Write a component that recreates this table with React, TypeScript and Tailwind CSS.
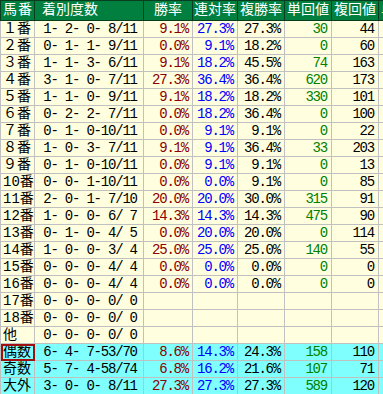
import React from "react";

type Row = {
    label: string;
    record: string;
    win?: string;
    rentai?: string;
    fukusho?: string;
    tankai?: string;
    fukukai?: string;
    odd?: boolean;
    mark?: boolean;
};

const rows: Row[] = [
    { label: "１番", record: " 1- 2- 0- 8/11", win: "9.1%", rentai: "27.3%", fukusho: "27.3%", tankai: "30", fukukai: "44" },
    { label: "２番", record: " 0- 1- 1- 9/11", win: "0.0%", rentai: "9.1%", fukusho: "18.2%", tankai: "0", fukukai: "60" },
    { label: "３番", record: " 1- 1- 3- 6/11", win: "9.1%", rentai: "18.2%", fukusho: "45.5%", tankai: "74", fukukai: "163" },
    { label: "４番", record: " 3- 1- 0- 7/11", win: "27.3%", rentai: "36.4%", fukusho: "36.4%", tankai: "620", fukukai: "173" },
    { label: "５番", record: " 1- 1- 0- 9/11", win: "9.1%", rentai: "18.2%", fukusho: "18.2%", tankai: "330", fukukai: "101" },
    { label: "６番", record: " 0- 2- 2- 7/11", win: "0.0%", rentai: "18.2%", fukusho: "36.4%", tankai: "0", fukukai: "100" },
    { label: "７番", record: " 0- 1- 0-10/11", win: "0.0%", rentai: "9.1%", fukusho: "9.1%", tankai: "0", fukukai: "22" },
    { label: "８番", record: " 1- 0- 3- 7/11", win: "9.1%", rentai: "9.1%", fukusho: "36.4%", tankai: "33", fukukai: "203" },
    { label: "９番", record: " 0- 1- 0-10/11", win: "0.0%", rentai: "9.1%", fukusho: "9.1%", tankai: "0", fukukai: "13" },
    { label: "10番", record: " 0- 0- 1-10/11", win: "0.0%", rentai: "0.0%", fukusho: "9.1%", tankai: "0", fukukai: "85" },
    { label: "11番", record: " 2- 0- 1- 7/10", win: "20.0%", rentai: "20.0%", fukusho: "30.0%", tankai: "315", fukukai: "91" },
    { label: "12番", record: " 1- 0- 0- 6/ 7", win: "14.3%", rentai: "14.3%", fukusho: "14.3%", tankai: "475", fukukai: "90" },
    { label: "13番", record: " 0- 1- 0- 4/ 5", win: "0.0%", rentai: "20.0%", fukusho: "20.0%", tankai: "0", fukukai: "114" },
    { label: "14番", record: " 1- 0- 0- 3/ 4", win: "25.0%", rentai: "25.0%", fukusho: "25.0%", tankai: "140", fukukai: "55" },
    { label: "15番", record: " 0- 0- 0- 4/ 4", win: "0.0%", rentai: "0.0%", fukusho: "0.0%", tankai: "0", fukukai: "0" },
    { label: "16番", record: " 0- 0- 0- 4/ 4", win: "0.0%", rentai: "0.0%", fukusho: "0.0%", tankai: "0", fukukai: "0" },
    { label: "17番", record: " 0- 0- 0- 0/ 0" },
    { label: "18番", record: " 0- 0- 0- 0/ 0" },
    { label: "他", record: " 0- 0- 0- 0/ 0" },
    { label: "偶数", record: " 6- 4- 7-53/70", win: "8.6%", rentai: "14.3%", fukusho: "24.3%", tankai: "158", fukukai: "110", odd: true, mark: true },
    { label: "奇数", record: " 5- 7- 4-58/74", win: "6.8%", rentai: "16.2%", fukusho: "21.6%", tankai: "107", fukukai: "71", odd: true },
    { label: "大外", record: " 3- 0- 0- 8/11", win: "27.3%", rentai: "27.3%", fukusho: "27.3%", tankai: "589", fukukai: "120", odd: true },
];

const font = { fontFamily: '"Liberation Mono", "Noto Sans CJK JP", monospace' };

export default function App() {
    return (
        <div className="w-[383px] h-[394px] overflow-hidden bg-white" style={font}>
            <table className="table-fixed border-collapse w-[420px]">
                <colgroup>
                    <col className="w-[34px]" />
                    <col className="w-[109px]" />
                    <col className="w-[49px]" />
                    <col className="w-[45px]" />
                    <col className="w-[47px]" />
                    <col className="w-[47px]" />
                    <col className="w-[47px]" />
                    <col className="w-[42px]" />
                </colgroup>
                <thead>
                    <tr className="h-[20px] bg-[#007f3f] text-white text-[14px] leading-[15px]">
                        <th className="border border-[#0a3d1f] font-normal text-left pl-[2px] tracking-[1px]">馬番</th>
                        <th className="border border-[#0a3d1f] font-normal text-left pl-[7px]">着別度数</th>
                        <th className="border border-[#0a3d1f] font-normal">勝率</th>
                        <th className="border border-[#0a3d1f] font-normal">連対率</th>
                        <th className="border border-[#0a3d1f] font-normal">複勝率</th>
                        <th className="border border-[#0a3d1f] font-normal">単回値</th>
                        <th className="border border-[#0a3d1f] font-normal">複回値</th>
                        <th className="border border-[#0a3d1f] font-normal text-left pl-[2px] text-[#ffff80] whitespace-nowrap overflow-hidden">単勝</th>
                    </tr>
                </thead>
                <tbody>
                    {rows.map((r) => (
                        <tr
                            key={r.label}
                            className={`h-[17px] text-[14px] leading-[15px] tracking-[-1.2px] ${r.odd ? "bg-[#80ffff]" : "bg-[#ffffdf]"}`}
                        >
                            <td
                                className={`border border-[#c0c0c0] pl-[2px] text-[14px] tracking-normal text-black ${r.mark ? "outline-2 -outline-offset-2 outline-[#a01010]" : ""}`}
                            >
                                {r.label}
                            </td>
                            <td className="border border-[#c0c0c0] pl-px whitespace-pre text-black">{r.record}</td>
                            <td className="border border-[#c0c0c0] pr-[4px] text-right text-[#8b0000]">{r.win}</td>
                            <td className="border border-[#c0c0c0] pr-[4px] text-right text-[#0000ff]">{r.rentai}</td>
                            <td className="border border-[#c0c0c0] pr-[4px] text-right text-black">{r.fukusho}</td>
                            <td className="border border-[#c0c0c0] pr-[4px] text-right text-[#008000]">{r.tankai}</td>
                            <td className="border border-[#c0c0c0] pr-[4px] text-right text-black">{r.fukukai}</td>
                            <td className="border border-[#c0c0c0]"></td>
                        </tr>
                    ))}
                </tbody>
            </table>
        </div>
    );
}
